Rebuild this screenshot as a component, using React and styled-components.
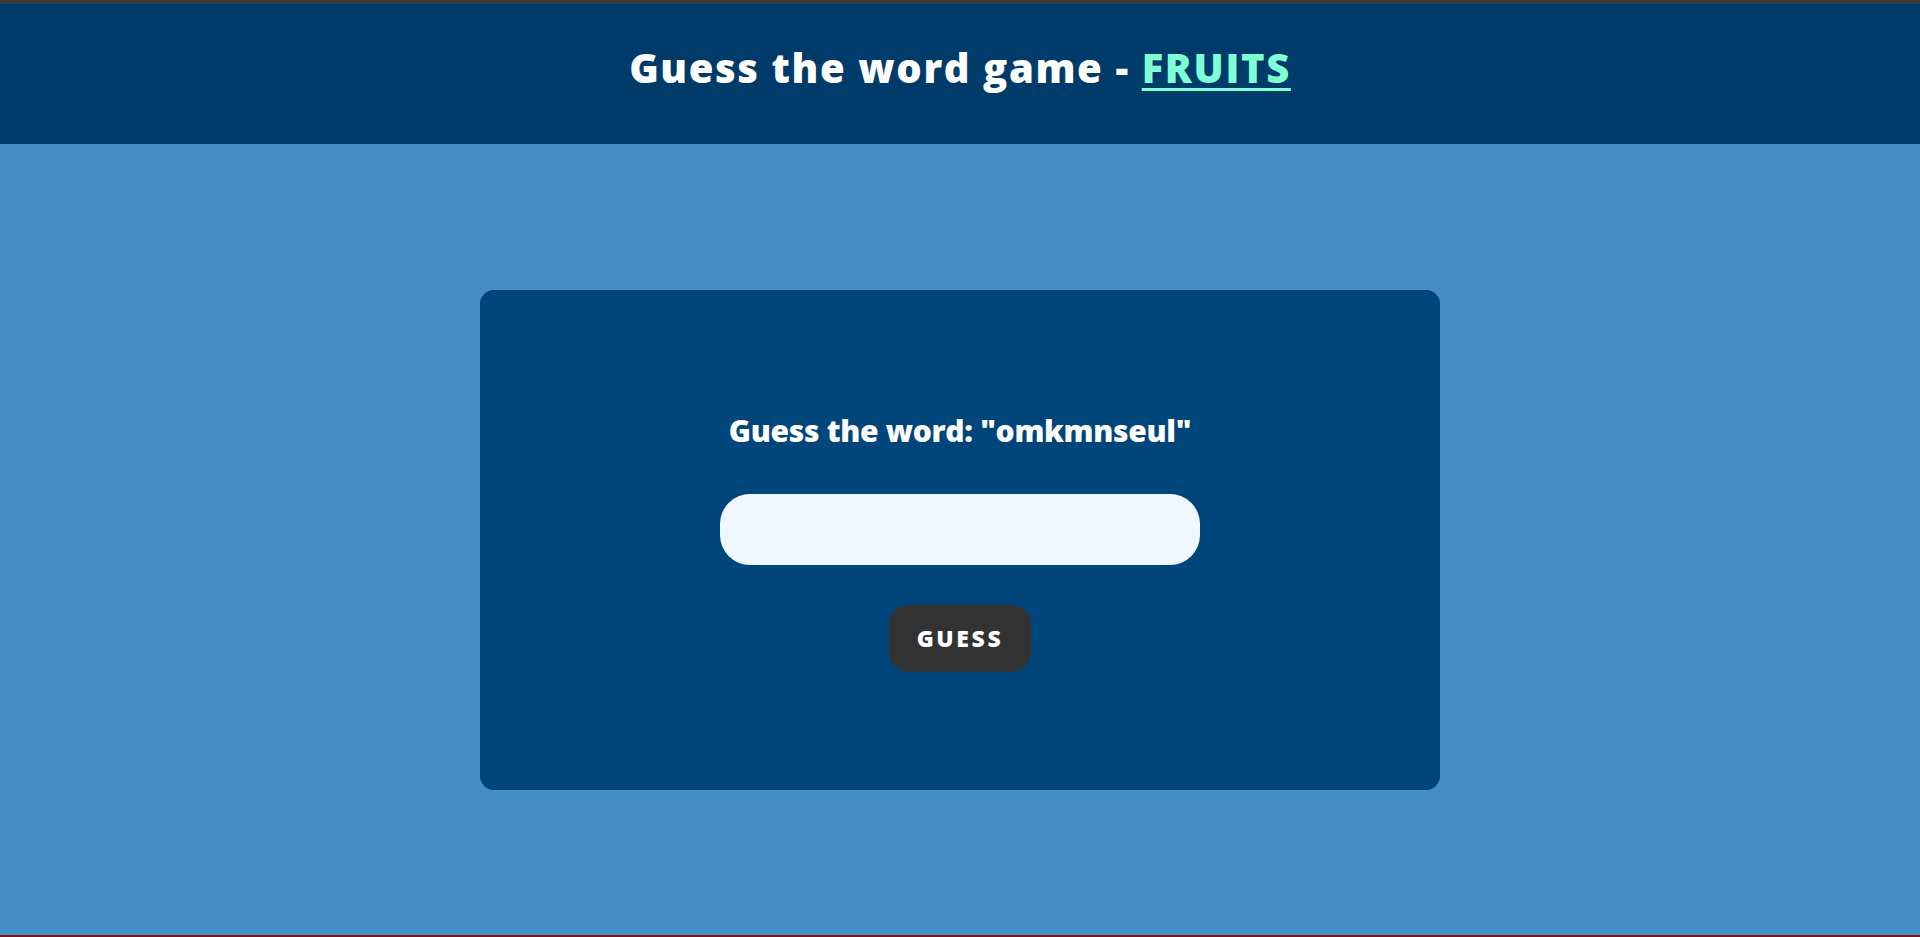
import React from "react";
import styled, { createGlobalStyle } from "styled-components";

const GlobalStyle = createGlobalStyle`
  * { box-sizing: border-box; }
  html, body { margin: 0; padding: 0; }
  body {
    font-family: "Open Sans", "Liberation Sans", sans-serif;
    background: #448ec8;
  }
`;

const Page = styled.div`
  min-height: 100vh;
  display: flex;
  flex-direction: column;
  background: #448ec8;
  border-top: 4px solid #3c3c3c;
  border-bottom: 2px solid #7a1818;
`;

const Header = styled.header`
  height: 140px;
  background: #003b6a;
  display: flex;
  align-items: center;
  justify-content: center;
  padding-bottom: 12px;
`;

const Title = styled.h1`
  margin: 0;
  color: #ffffff;
  font-size: 40px;
  font-weight: 800;
  letter-spacing: 1.6px;
  line-height: 1;
`;

const Category = styled.span`
  color: #7fffd4;
  text-decoration: underline;
  text-decoration-thickness: 3px;
  text-underline-offset: 5px;
`;

const Main = styled.main`
  flex: 1;
  display: flex;
  justify-content: center;
  align-items: flex-start;
  padding-top: 146px;
`;

const Card = styled.section`
  width: 960px;
  height: 500px;
  background: #00467a;
  border-radius: 14px;
  display: flex;
  flex-direction: column;
  align-items: center;
  justify-content: center;
  padding-top: 4px;
`;

const Prompt = styled.h2`
  margin: 0 0 45px;
  color: #ffffff;
  font-size: 30px;
  font-weight: 800;
  letter-spacing: -0.3px;
  line-height: 1.2;
`;

const Input = styled.input`
  width: 480px;
  height: 71px;
  border: none;
  outline: none;
  border-radius: 30px;
  background: #eff7ff;
  padding: 0 24px;
  font-family: inherit;
  font-size: 22px;
`;

const Button = styled.button`
  margin-top: 40px;
  width: 142px;
  height: 67px;
  border: none;
  border-radius: 20px;
  background: #333333;
  color: #ffffff;
  font-family: inherit;
  font-size: 23px;
  font-weight: 800;
  letter-spacing: 2.6px;
  cursor: pointer;
`;

export default function App() {
  return (
    <>
      <GlobalStyle />
      <Page>
        <Header>
          <Title>
            Guess the word game - <Category>FRUITS</Category>
          </Title>
        </Header>
        <Main>
          <Card>
            <Prompt>Guess the word: "omkmnseul"</Prompt>
            <Input type="text" />
            <Button>GUESS</Button>
          </Card>
        </Main>
      </Page>
    </>
  );
}
